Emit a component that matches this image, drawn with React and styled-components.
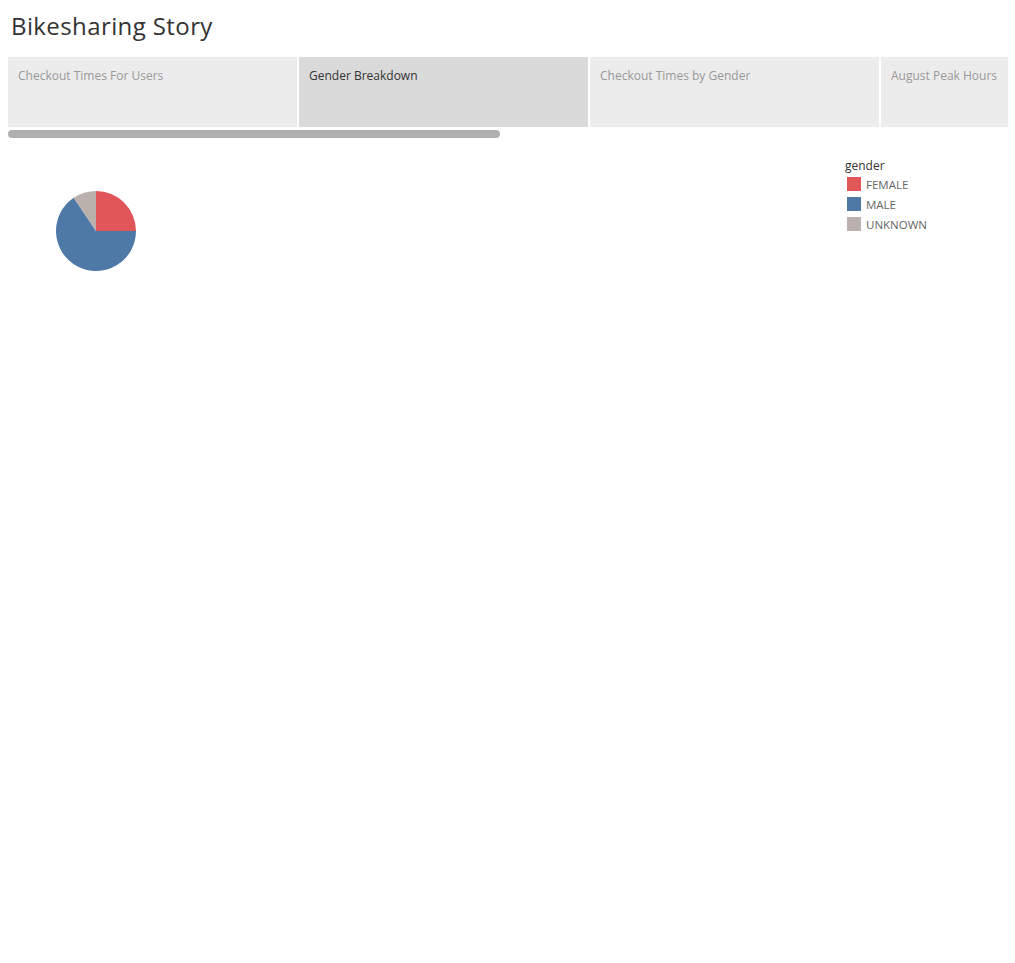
import styled, { createGlobalStyle } from 'styled-components'

const GlobalStyle = createGlobalStyle`
    body {
        margin: 0;
        background: #ffffff;
        font-family: 'Open Sans', 'Liberation Sans', sans-serif;
    }
`

const Page = styled.div`
    width: 1015px;
    height: 963px;
    padding: 0 7px 0 8px;
    box-sizing: border-box;
`

const Title = styled.h1`
    font-family: 'Open Sans', sans-serif;
    font-weight: 400;
    font-size: 24px;
    letter-spacing: 0.4px;
    color: #333333;
    margin: 0;
    padding: 10px 0 0 3px;
    height: 57px;
    box-sizing: border-box;
    line-height: 32px;
`

const TabStrip = styled.div`
    width: 1000px;
    overflow: hidden;
`

const Tabs = styled.div`
    display: flex;
    gap: 2px;
    height: 70px;
`

const Tab = styled.div`
    flex: 0 0 289px;
    background: ${props => props.$active ? '#dadada' : '#ececec'};
    color: ${props => props.$active ? '#333333' : '#999999'};
    font-size: 12px;
    line-height: 16px;
    padding: 11px 10px;
    box-sizing: border-box;
    white-space: nowrap;
`

const Scrollbar = styled.div`
    height: 8px;
    margin-top: 3px;
`

const Thumb = styled.div`
    width: 492px;
    height: 8px;
    border-radius: 4px;
    background: #b0b0b0;
`

const Body = styled.div`
    display: flex;
    justify-content: space-between;
    padding: 21px 0 0 48px;
`

const PieBox = styled.div`
    padding-top: 32px;
`

const Legend = styled.div`
    width: 163px;
    display: flex;
    flex-direction: column;
    gap: 4px;
`

const LegendTitle = styled.div`
    font-size: 12px;
    color: #333333;
    line-height: 14px;
    margin-bottom: -1px;
`

const LegendRow = styled.div`
    display: flex;
    align-items: center;
    gap: 5px;
    height: 16px;
    padding-left: 2px;
    font-size: 11.5px;
    color: #666666;
`

const Swatch = styled.span`
    width: 14px;
    height: 14px;
    background: ${props => props.$color};
`

const slices = [
    { label: 'FEMALE', color: '#e15759', value: 0.25 },
    { label: 'MALE', color: '#4e79a7', value: 0.656 },
    { label: 'UNKNOWN', color: '#bab0ac', value: 0.094 },
]

function point(r, frac) {
    const a = frac * 2 * Math.PI
    return [r + r * Math.sin(a), r - r * Math.cos(a)]
}

function Pie({ r = 40 }) {
    let start = 0
    return (
        <svg width={r * 2} height={r * 2}>
            {slices.map(s => {
                const [x1, y1] = point(r, start)
                const [x2, y2] = point(r, start + s.value)
                const large = s.value > 0.5 ? 1 : 0
                start += s.value
                return (
                    <path key={s.label} fill={s.color}
                        d={`M${r} ${r} L${x1} ${y1} A${r} ${r} 0 ${large} 1 ${x2} ${y2} Z`} />
                )
            })}
        </svg>
    )
}

export default function App() {
    const tabs = ['Checkout Times For Users', 'Gender Breakdown', 'Checkout Times by Gender', 'August Peak Hours']
    return (
        <Page>
            <GlobalStyle />
            <Title>Bikesharing Story</Title>
            <TabStrip>
                <Tabs>
                    {tabs.map((t, i) => <Tab key={t} $active={i === 1}>{t}</Tab>)}
                </Tabs>
            </TabStrip>
            <Scrollbar><Thumb /></Scrollbar>
            <Body>
                <PieBox><Pie /></PieBox>
                <Legend>
                    <LegendTitle>gender</LegendTitle>
                    {slices.map(s => (
                        <LegendRow key={s.label}><Swatch $color={s.color} />{s.label}</LegendRow>
                    ))}
                </Legend>
            </Body>
        </Page>
    )
}
